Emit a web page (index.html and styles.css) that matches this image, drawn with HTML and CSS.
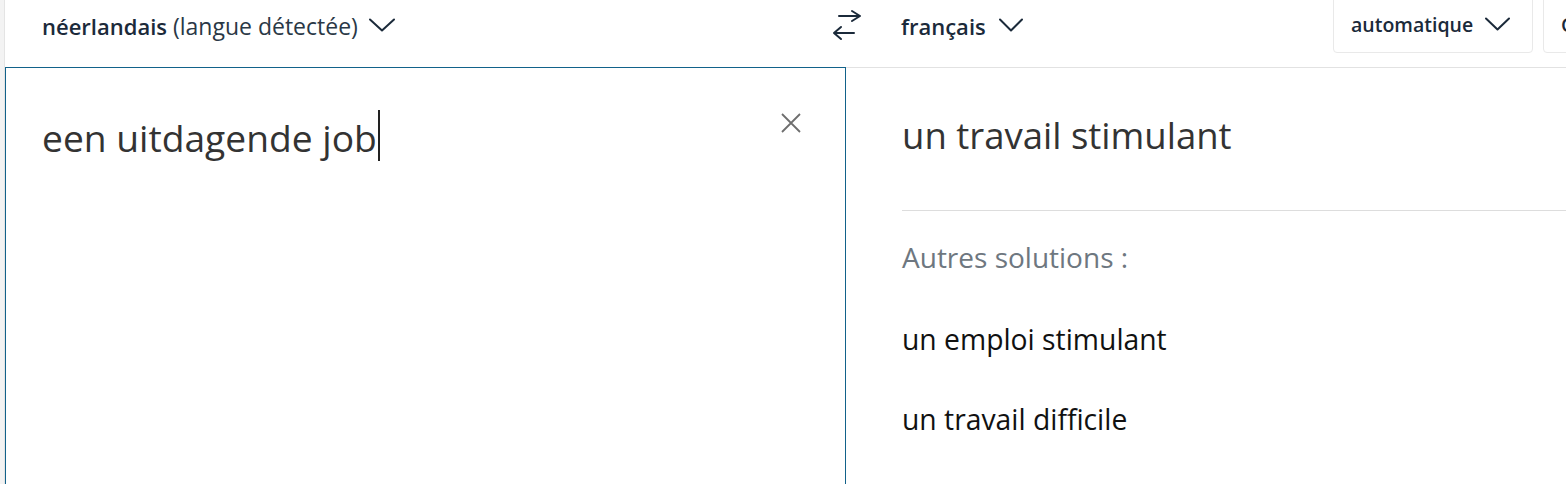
FILE: index.html
```html
<!DOCTYPE html>
<html lang="fr">
<head>
<meta charset="utf-8">
<title>Traduction</title>
<link rel="stylesheet" href="styles.css">
</head>
<body>
<div class="page">
  <div class="edge"></div>
  <div class="main">
    <header class="bar">
      <div class="src-lang">
        <span class="lang"><b>néerlandais</b> (langue détectée)</span>
        <svg class="chev" width="26" height="14" viewBox="0 0 26 14"><path d="M1 1.5 L13 12.5 L25 1.5"/></svg>
      </div>
      <svg class="swap" width="34" height="34" viewBox="0 0 34 34"><path d="M9 8 H30 M22 3 L30 8 L22 13 M4 25 H24 M11 19 L4 25 L11 31"/></svg>
      <div class="tgt-lang">
        <span class="lang"><b>français</b></span>
        <svg class="chev" width="24" height="14" viewBox="0 0 24 14"><path d="M1 1.5 L12 12.5 L23 1.5"/></svg>
      </div>
      <div class="btn style-btn">
        <span>automatique</span>
        <svg class="chev" width="25" height="14" viewBox="0 0 25 14"><path d="M1 1.5 L12.5 12.5 L24 1.5"/></svg>
      </div>
      <div class="btn gloss-btn"><span>Glossaire</span></div>
    </header>
    <div class="panels">
      <section class="source">
        <div class="src-text">een uitdagende job<span class="caret"></span></div>
        <svg class="close" width="22" height="22" viewBox="0 0 22 22"><path d="M2 2 L20 20 M20 2 L2 20"/></svg>
      </section>
      <section class="target">
        <div class="tgt-text">un travail stimulant</div>
        <div class="alts">
          <div class="alts-title">Autres solutions :</div>
          <div class="alt">un emploi stimulant</div>
          <div class="alt">un travail difficile</div>
        </div>
      </section>
    </div>
  </div>
</div>
</body>
</html>
```

FILE: styles.css
```css
html, body {
  margin: 0;
  padding: 0;
  height: 100%;
  overflow: hidden;
  background: #ffffff;
  font-family: "Open Sans", "Noto Sans", sans-serif;
}

.page {
  display: flex;
  height: 484px;
  overflow: hidden;
}

.edge {
  flex: 0 0 4px;
  background: #f3f3f3;
  border-right: 1px solid #e4e4e4;
}

.main {
  flex: 1;
  min-width: 0;
  display: flex;
  flex-direction: column;
  overflow: hidden;
}

.bar {
  height: 67px;
  display: flex;
  align-items: flex-start;
  flex-shrink: 0;
  color: #1b2a3a;
}

.src-lang {
  flex: 0 0 825px;
  box-sizing: border-box;
  padding: 11px 0 0 37px;
  display: flex;
  align-items: center;
}

.lang {
  font-size: 23px;
  line-height: 30px;
  white-space: nowrap;
  color: #2a3846;
}

.lang b {
  font-size: 22px;
  font-weight: 600;
  color: #1b2a3a;
}

.chev {
  flex-shrink: 0;
  margin-bottom: 2px;
}

.chev path, .swap path {
  fill: none;
  stroke: #1b2a3a;
  stroke-width: 2;
  stroke-linecap: round;
  stroke-linejoin: round;
}

.src-lang .chev {
  margin-left: 11px;
}

.swap {
  flex-shrink: 0;
  margin-top: 8px;
}

.tgt-lang {
  flex: 0 0 432px;
  box-sizing: border-box;
  margin-left: 37px;
  padding-top: 11px;
  display: flex;
  align-items: center;
}

.tgt-lang .chev {
  margin-left: 13px;
}

.btn {
  flex-shrink: 0;
  box-sizing: border-box;
  margin-top: -4px;
  border: 1px solid #e9e9e9;
  border-radius: 4px;
  display: flex;
  align-items: center;
  padding: 14px 0 13px 17px;
  font-size: 19.5px;
  font-weight: 600;
  line-height: 28px;
  color: #1b2a3a;
  white-space: nowrap;
}

.style-btn {
  width: 200px;
}

.style-btn .chev {
  margin-left: 12px;
}

.gloss-btn {
  margin-left: 10px;
  width: 140px;
}

.panels {
  flex: 1;
  display: flex;
  min-height: 0;
}

.source {
  flex: 0 0 841px;
  box-sizing: border-box;
  border: 1px solid #12628a;
  border-bottom: none;
  display: flex;
  align-items: flex-start;
  padding: 42px 43px 0 36px;
}

.src-text {
  flex: 1;
  font-size: 37.2px;
  line-height: 50px;
  color: #333333;
  white-space: nowrap;
}

.caret {
  display: inline-block;
  width: 2px;
  height: 51px;
  background: #222222;
  vertical-align: -9px;
  margin-left: 1px;
}

.close {
  flex-shrink: 0;
  margin-top: 2px;
}

.close path {
  fill: none;
  stroke: #6e6e6e;
  stroke-width: 1.8;
}

.target {
  flex: 1;
  min-width: 0;
  border-top: 1px solid #e2e2e2;
  padding: 42px 0 0 56px;
}

.tgt-text {
  font-size: 36.5px;
  line-height: 50px;
  color: #333333;
  white-space: nowrap;
  padding-bottom: 50px;
  border-bottom: 1px solid #dddddd;
}

.alts {
  padding-top: 27px;
  display: flex;
  flex-direction: column;
  gap: 42px;
}

.alts-title {
  font-size: 28px;
  line-height: 38px;
  color: #6e7780;
  margin-bottom: 2px;
}

.alt {
  font-size: 28.3px;
  line-height: 38px;
  color: #111111;
  white-space: nowrap;
}
```
